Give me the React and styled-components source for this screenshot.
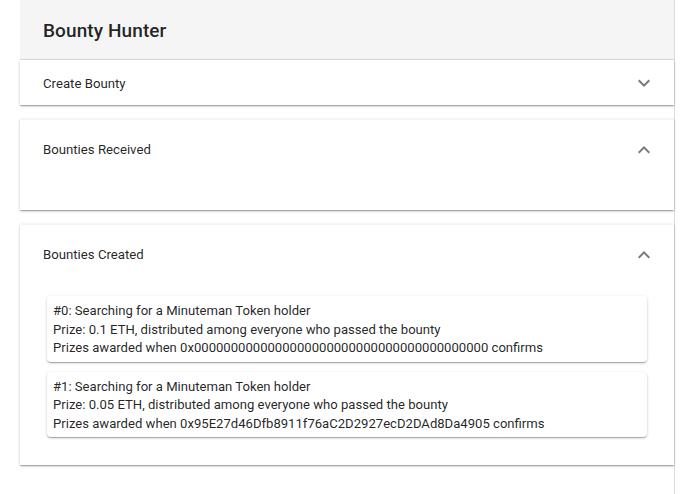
import React from "react";
import styled, { createGlobalStyle } from "styled-components";

const GlobalStyle = createGlobalStyle`
  html, body {
    margin: 0;
    padding: 0;
    background: #fff;
    font-family: Roboto, "Liberation Sans", Arial, sans-serif;
    color: rgba(0, 0, 0, 0.87);
  }
`;

const Page = styled.div`
  margin: 0 20px;
  min-height: 100vh;
  border-right: 1px solid #dcdcdc;
  box-sizing: border-box;
`;

const Header = styled.div`
  height: 60px;
  background: #f5f5f5;
  border-bottom: 1px solid #dedede;
  box-sizing: border-box;
  display: flex;
  align-items: center;
  padding: 2px 23px 0;
  font-size: 19px;
  font-weight: 500;
  letter-spacing: 0.1px;
`;

const Panel = styled.div`
  background: #fff;
  margin-bottom: 14px;
  box-shadow: 0 1px 3px rgba(0, 0, 0, 0.2), 0 1px 1px rgba(0, 0, 0, 0.14),
    0 2px 1px -1px rgba(0, 0, 0, 0.12);
  border-top: 1px solid ${(p) => (p.first ? "transparent" : "#f4f4f4")};
`;

const Summary = styled.div`
  display: flex;
  align-items: center;
  justify-content: space-between;
  height: ${(p) => (p.expanded ? 59 : 44)}px;
  padding: 0 18px 0 23px;
  font-size: 13.2px;
`;

const Chevron = styled.svg`
  width: 24px;
  height: 24px;
  fill: #7a7a7a;
  transform: rotate(${(p) => (p.open ? 180 : 0)}deg);
`;

const Details = styled.div`
  padding: ${(p) => (p.empty ? "8px 24px 23px" : "12px 24px 28px")};
  display: flex;
  flex-direction: column;
  gap: 10px;
`;

const Card = styled.div`
  margin: 0 3px;
  padding: 6px 6px 4px;
  border-radius: 4px;
  background: #fff;
  box-shadow: 0 1px 3px rgba(0, 0, 0, 0.2), 0 1px 1px rgba(0, 0, 0, 0.14),
    0 2px 1px -1px rgba(0, 0, 0, 0.12);
  font-size: 13.1px;
  line-height: 18.5px;
`;

function ExpandIcon({ open }) {
  return (
    <Chevron open={open} viewBox="0 0 24 24">
      <path d="M16.59 8.59L12 13.17 7.41 8.59 6 10l6 6 6-6z" />
    </Chevron>
  );
}

const bounties = [
  {
    id: 0,
    prize: "0.1",
    address: "0x0000000000000000000000000000000000000000",
  },
  {
    id: 1,
    prize: "0.05",
    address: "0x95E27d46Dfb8911f76aC2D2927ecD2DAd8Da4905",
  },
];

export default function App() {
  return (
    <>
      <GlobalStyle />
      <Page>
        <Header>Bounty Hunter</Header>
        <Panel first>
          <Summary>
            Create Bounty
            <ExpandIcon />
          </Summary>
        </Panel>
        <Panel>
          <Summary expanded>
            Bounties Received
            <ExpandIcon open />
          </Summary>
          <Details empty />
        </Panel>
        <Panel>
          <Summary expanded>
            Bounties Created
            <ExpandIcon open />
          </Summary>
          <Details>
            {bounties.map((b) => (
              <Card key={b.id}>
                #{b.id}: Searching for a Minuteman Token holder
                <br />
                Prize: {b.prize} ETH, distributed among everyone who passed the bounty
                <br />
                Prizes awarded when {b.address} confirms
              </Card>
            ))}
          </Details>
        </Panel>
      </Page>
    </>
  );
}
